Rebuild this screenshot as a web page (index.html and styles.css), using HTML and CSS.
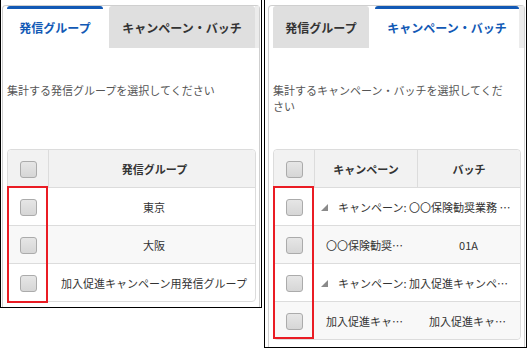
FILE: index.html
```html
<!DOCTYPE html>
<html lang="ja">
<head>
<meta charset="utf-8">
<link rel="stylesheet" href="styles.css">
</head>
<body>
<div class="wrap">
  <section class="panel panel-left">
    <div class="box">
      <div class="tabs">
        <div class="tab tab-active tab-w1">発信グループ</div>
        <div class="tab tab-w2">キャンペーン・バッチ</div>
        <div class="tab-fill"></div>
      </div>
      <div class="content">
        <p class="desc">集計する発信グループを選択してください</p>
        <div class="grid">
          <table class="tbl">
            <colgroup><col class="c-chk"><col></colgroup>
            <thead>
              <tr><th><span class="chk"></span></th><th class="sep pl">発信グループ</th></tr>
            </thead>
            <tbody>
              <tr><td><span class="chk"></span></td><td class="pl">東京</td></tr>
              <tr><td><span class="chk"></span></td><td class="pl">大阪</td></tr>
              <tr><td><span class="chk"></span></td><td class="pl">加入促進キャンペーン用発信グループ</td></tr>
            </tbody>
          </table>
          <div class="mark mark-3"></div>
        </div>
      </div>
    </div>
  </section>
  <section class="panel panel-right">
    <div class="box">
      <div class="tabs">
        <div class="tab tab-w1">発信グループ</div>
        <div class="tab tab-active tab-w3">キャンペーン・バッチ</div>
        <div class="tab-fill"></div>
      </div>
      <div class="content">
        <p class="desc">集計するキャンペーン・バッチを選択してください</p>
        <div class="grid">
          <table class="tbl">
            <colgroup><col class="c-chk"><col class="c-camp"><col></colgroup>
            <thead>
              <tr><th><span class="chk"></span></th><th class="sep">キャンペーン</th><th class="sep">バッチ</th></tr>
            </thead>
            <tbody>
              <tr><td><span class="chk"></span></td><td colspan="2" class="group"><svg class="tri" width="7" height="7" viewBox="0 0 7 7"><polygon points="7,0 7,7 0,7"/></svg><span class="gtext">キャンペーン: 〇〇保険勧奨業務 2023年度</span></td></tr>
              <tr><td><span class="chk"></span></td><td class="cut">〇〇保険勧奨業務</td><td class="cut">01A</td></tr>
              <tr><td><span class="chk"></span></td><td colspan="2" class="group"><svg class="tri" width="7" height="7" viewBox="0 0 7 7"><polygon points="7,0 7,7 0,7"/></svg><span class="gtext">キャンペーン: 加入促進キャンペーン</span></td></tr>
              <tr><td><span class="chk"></span></td><td class="cut">加入促進キャンペーン</td><td class="cut">加入促進キャンペーン</td></tr>
            </tbody>
          </table>
          <div class="mark mark-4"></div>
        </div>
      </div>
    </div>
  </section>
</div>
</body>
</html>
```
FILE: styles.css
```css
* { box-sizing: border-box; }
html, body { margin: 0; padding: 0; background: #fff; }
body {
  font-family: "Noto Sans CJK JP", "Noto Sans", sans-serif;
  color: #333;
}
.wrap { display: flex; gap: 2px; align-items: flex-start; }
.panel {
  border: 1px solid #000;
  border-top: none;
  padding-top: 5px;
}
.panel-left { width: 262px; height: 308px; padding-left: 1px; padding-right: 1px; }
.panel-right { width: 263px; height: 348px; padding-left: 3px; padding-right: 1px; }
.box {
  height: 100%;
  border: 1px solid #cfcfcf;
  border-bottom: none;
  border-radius: 4px 4px 0 0;
}
.tabs {
  display: flex;
  gap: 6px;
  height: 42px;
  padding-left: 4px;
}
.tab {
  display: flex;
  align-items: center;
  justify-content: center;
  font-size: 12px;
  font-weight: bold;
  color: #333;
  background: #dfdfdf;
  white-space: nowrap;
  border-radius: 3px 3px 0 0;
}
.tab-w1 { width: 96px; }
.tab-w2 { width: 146px; }
.tab-w3 { width: 144px; }
.tab-active {
  background: #fff;
  color: #1259b5;
  border-top: 3px solid #1259b5;
  padding-bottom: 3px;
}
.tab-fill { flex: 1; background: #ececec; margin-left: -6px; }
.content { padding: 0 3px 0 4px; }
.desc {
  margin: 0;
  height: 101px;
  padding: 34px 10px 0 0;
  font-size: 11px;
  line-height: 16px;
  color: #555;
}
.grid { position: relative; }
.tbl {
  width: 100%;
  table-layout: fixed;
  border-collapse: separate;
  border-spacing: 0;
  border: 1px solid #dcdcdc;
  border-radius: 4px;
  font-size: 11px;
  color: #333;
}
.c-chk { width: 40px; }
.c-camp { width: 103px; }
.tbl th, .tbl td {
  height: 37px;
  padding: 0;
  text-align: center;
  vertical-align: middle;
  white-space: nowrap;
}
.tbl th { background: #f2f2f2; font-weight: bold; }
.tbl thead th:first-child { border-top-left-radius: 4px; }
.tbl thead th:last-child { border-top-right-radius: 4px; }
.tbl th.sep { border-left: 1px solid #dcdcdc; }
.tbl td { border-top: 1px solid #dcdcdc; height: 38px; }
.tbl tbody tr:nth-child(even) td { background: #f8f8f8; }
.tbl tbody tr:last-child td:first-child { border-bottom-left-radius: 4px; }
.tbl tbody tr:last-child td:last-child { border-bottom-right-radius: 4px; }
.pl { padding-left: 5px !important; }
.chk {
  display: inline-block;
  width: 17px;
  height: 17px;
  border: 1px solid #ababab;
  border-radius: 3px;
  background: linear-gradient(#e6e6e6, #d6d6d6);
  vertical-align: middle;
}
.cut {
  overflow: hidden;
  text-overflow: ellipsis;
  padding: 0 12px !important;
}
.group {
  text-align: left !important;
  padding: 0 8px 0 7px !important;
  overflow: hidden;
  text-overflow: ellipsis;
}
.tri { fill: #8a8a8a; margin-right: 10px; vertical-align: 1px; }
.gtext { }
.mark {
  position: absolute;
  left: 0;
  top: 37px;
  width: 41px;
  border: 2px solid #ea1c24;
}
.mark-3 { height: 117px; }
.mark-4 { height: 153px; }
```
